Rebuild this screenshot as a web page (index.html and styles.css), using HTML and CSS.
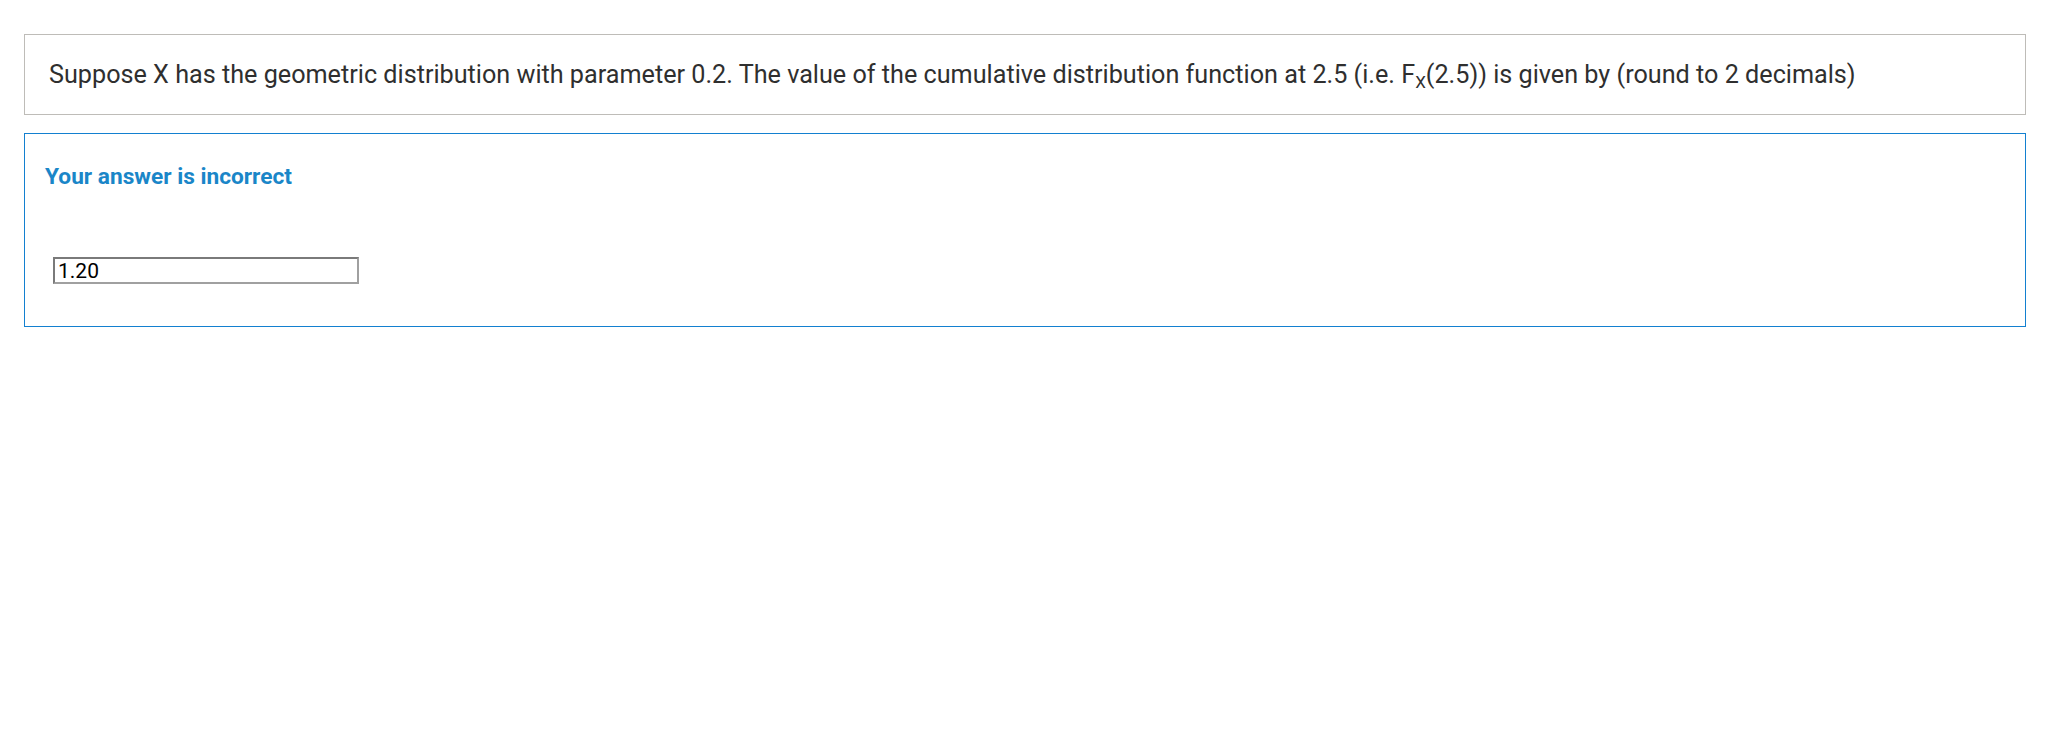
FILE: index.html
```html
<!DOCTYPE html>
<html lang="en">
<head>
<meta charset="utf-8">
<title>Question</title>
<link rel="stylesheet" href="styles.css">
</head>
<body>
<div class="page">
  <div class="question">Suppose X has the geometric distribution with parameter 0.2. The value of the cumulative distribution function at 2.5 (i.e. F<sub class="sub">X</sub>(2.5)) is given by (round to 2 decimals)</div>
  <div class="feedback">
    <div class="verdict">Your answer is incorrect</div>
    <div class="answer-row">
      <input class="answer" type="text" value="1.20">
    </div>
  </div>
</div>
</body>
</html>
```
FILE: styles.css
```css
html, body {
  margin: 0;
  padding: 0;
  background: #ffffff;
}
.page {
  padding: 34px 24px 0 24px;
  display: flex;
  flex-direction: column;
  gap: 18px;
  font-family: Roboto, "Liberation Sans", sans-serif;
}
.question {
  border: 1px solid #bebcb8;
  padding: 20px 24px;
  font-size: 25.2px;
  line-height: 39px;
  color: #2f2f2f;
}
.sub {
  font-size: 17px;
  line-height: 0;
  vertical-align: -5px;
}
.feedback {
  border: 1px solid #1380d0;
  height: 194px;
  box-sizing: border-box;
  padding: 28px 20px 0 20px;
}
.verdict {
  font-size: 22.7px;
  font-weight: 700;
  color: #1a86c8;
  line-height: 30px;
}
.answer-row {
  margin-top: 65px;
  padding-left: 8px;
}
.answer {
  width: 306px;
  height: 27px;
  box-sizing: border-box;
  border: 2px solid #7a7a7a;
  border-right-color: #a0a0a0;
  border-bottom-color: #a0a0a0;
  padding: 0 3px;
  margin: 0;
  font-family: Roboto, "Liberation Sans", sans-serif;
  font-size: 21px;
  color: #000000;
  background: #ffffff;
  outline: none;
}
```
